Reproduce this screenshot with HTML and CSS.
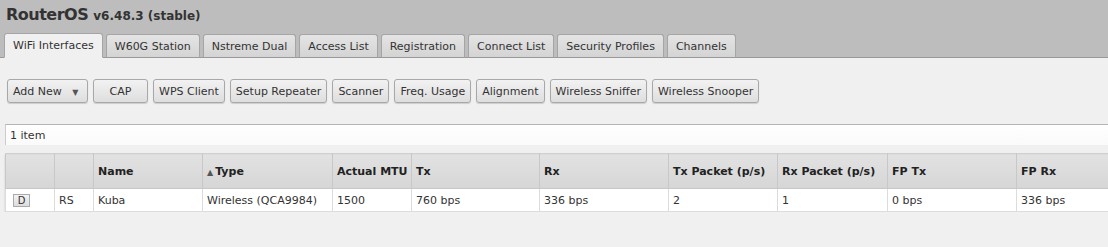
FILE: index.html
```html
<!DOCTYPE html>
<html lang="en">
<head>
  <meta charset="UTF-8" />
  <title>RouterOS - Wireless</title>
  <link rel="stylesheet" href="styles.css">
</head>
<body>

  <div class="top">
    <div class="title">RouterOS <span class="ver">v6.48.3 (stable)</span></div>
    <div class="tabs">
      <div class="tab active">WiFi Interfaces</div>
      <div class="tab">W60G Station</div>
      <div class="tab">Nstreme Dual</div>
      <div class="tab">Access List</div>
      <div class="tab">Registration</div>
      <div class="tab">Connect List</div>
      <div class="tab">Security Profiles</div>
      <div class="tab">Channels</div>
    </div>
  </div>

  <div class="content">
    <div class="toolbar">
      <div class="btn addnew">Add New <span class="arrow">&#9660;</span></div>
      <div class="btn cap">CAP</div>
      <div class="btn">WPS Client</div>
      <div class="btn">Setup Repeater</div>
      <div class="btn">Scanner</div>
      <div class="btn">Freq. Usage</div>
      <div class="btn">Alignment</div>
      <div class="btn">Wireless Sniffer</div>
      <div class="btn">Wireless Snooper</div>
    </div>

    <div class="status">1 item</div>

    <table class="grid">
      <colgroup>
        <col style="width:49px"><col style="width:39px"><col style="width:109px"><col style="width:130px">
        <col style="width:79px"><col style="width:128px"><col style="width:129px"><col style="width:109px">
        <col style="width:110px"><col style="width:129px"><col style="width:129px">
      </colgroup>
      <thead>
        <tr>
          <th></th><th></th><th>Name</th><th><span class="sort">&#9650;</span>Type</th><th>Actual MTU</th>
          <th>Tx</th><th>Rx</th><th>Tx Packet (p/s)</th><th>Rx Packet (p/s)</th><th>FP Tx</th><th>FP Rx</th>
        </tr>
      </thead>
      <tbody>
        <tr>
          <td><span class="dbtn">D</span></td><td>RS</td><td>Kuba</td><td>Wireless (QCA9984)</td><td>1500</td>
          <td>760 bps</td><td>336 bps</td><td>2</td><td>1</td><td>0 bps</td><td>336 bps</td>
        </tr>
      </tbody>
    </table>
  </div>

</body>
</html>
```

FILE: styles.css
```css
html, body {
  margin: 0;
  background: #f0f0f0;
  font-family: "DejaVu Sans", Verdana, sans-serif;
  font-size: 11px;
  color: #222;
  overflow: hidden;
}
.top {
  background: #bdbdbd;
  border-bottom: 1px solid #999;
  height: 57px;
  display: flex;
  flex-direction: column;
  justify-content: space-between;
}
.title {
  padding: 5px 0 0 6px;
  font-size: 16px;
  font-weight: bold;
  color: #333;
  letter-spacing: -0.5px;
}
.ver {
  font-size: 12px;
  letter-spacing: 0;
}
.tabs {
  display: flex;
  gap: 3px;
  padding-left: 4px;
  margin-bottom: -1px;
}
.tab {
  height: 22px;
  line-height: 23px;
  padding: 0 8px;
  background: linear-gradient(#e4e4e4, #d4d4d4);
  border: 1px solid #a5a5a5;
  border-bottom-color: #999;
  border-radius: 3px 3px 0 0;
  color: #333;
}
.tab.active {
  background: #f0f0f0;
  border-bottom-color: #f0f0f0;
  height: 23px;
  margin-top: -1px;
}
.content {
  padding: 0 0 0 5px;
}
.toolbar {
  display: flex;
  gap: 5px;
  margin: 21px 0 0 2px;
}
.btn {
  height: 22px;
  line-height: 23px;
  padding: 0 5px;
  background: linear-gradient(#f2f2f2, #dedede);
  border: 1px solid #a8a8a8;
  border-radius: 3px;
  box-shadow: 0 1px 1px rgba(0, 0, 0, 0.15);
  color: #333;
  white-space: nowrap;
}
.addnew {
  width: 69px;
}
.arrow {
  font-size: 8px;
  color: #555;
  margin-left: 7px;
}
.cap {
  width: 43px;
  text-align: center;
}
.status {
  margin-top: 21px;
  height: 20px;
  line-height: 21px;
  background: linear-gradient(#fff, #fafafa);
  border-top: 1px solid #b5b5b5;
  border-left: 1px solid #ccc;
  padding-left: 4px;
  color: #333;
}
.grid {
  margin-top: 8px;
  border-collapse: collapse;
  table-layout: fixed;
  width: 1140px;
  box-shadow: 0 2px 2px rgba(0, 0, 0, 0.15);
}
.grid th {
  height: 34px;
  background: linear-gradient(#e2e2e2, #d6d6d6);
  border: 1px solid #c8c8c8;
  border-top-color: #d0d0d0;
  text-align: left;
  padding: 0 4px;
  font-weight: bold;
  color: #222;
  white-space: nowrap;
}
.sort {
  font-size: 8px;
  color: #555;
  margin-right: 2px;
}
.grid td {
  height: 22px;
  background: #fff;
  border: 1px solid #dcdcdc;
  padding: 0 4px;
  color: #333;
  white-space: nowrap;
}
.dbtn {
  display: inline-block;
  margin-left: 3px;
  width: 15px;
  height: 11px;
  line-height: 12px;
  text-align: center;
  font-size: 10px;
  background: linear-gradient(#f4f4f4, #dcdcdc);
  border: 1px solid #aaa;
}
```
